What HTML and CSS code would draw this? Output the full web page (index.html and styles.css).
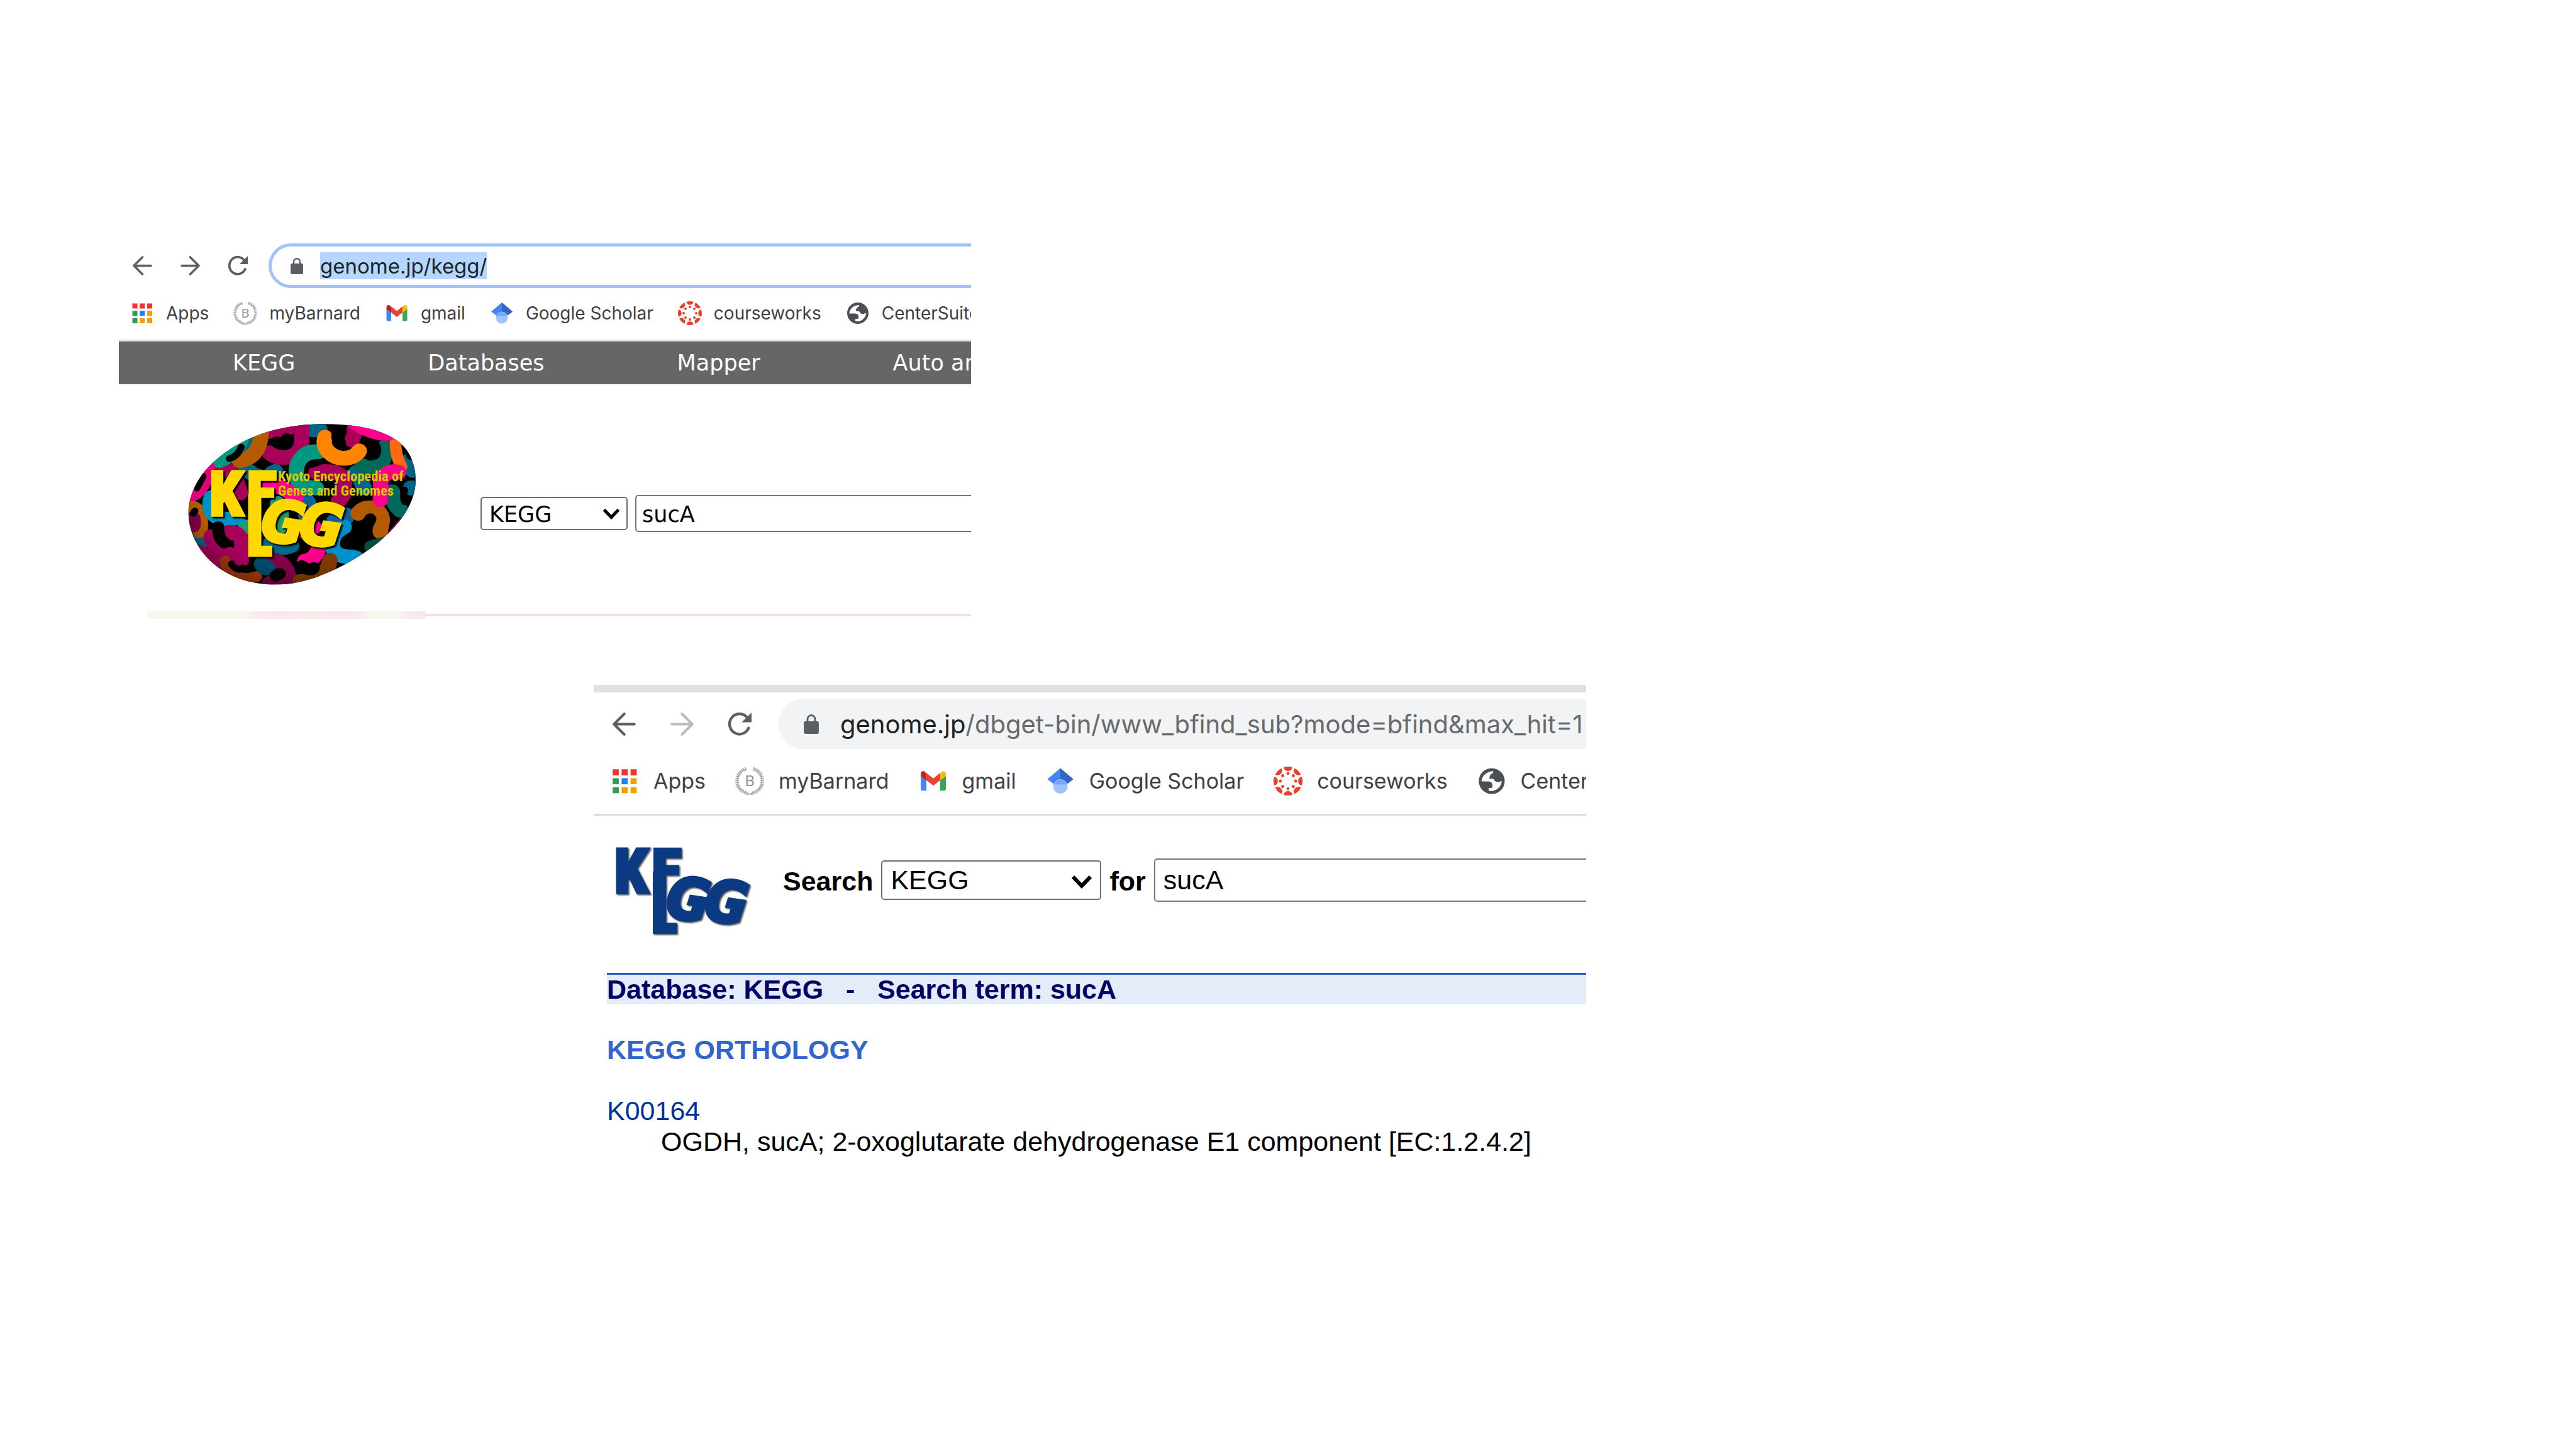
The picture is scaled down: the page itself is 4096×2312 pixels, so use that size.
FILE: index.html
```html
<!DOCTYPE html>
<html lang="en">
<head>
<meta charset="utf-8">
<title>KEGG search for sucA</title>
<link rel="stylesheet" href="styles.css">
</head>
<body>
<svg class="defs" aria-hidden="true">
  <symbol id="back" viewBox="0 0 32 32"><path d="M16 2 2 16l14 14M2 16h28" fill="none" stroke="currentColor" stroke-width="3.6" stroke-linecap="round" stroke-linejoin="round"/></symbol>
  <symbol id="forward" viewBox="0 0 32 32"><path d="M16 2l14 14-14 14M30 16H2" fill="none" stroke="currentColor" stroke-width="3.6" stroke-linecap="round" stroke-linejoin="round"/></symbol>
  <symbol id="reload" viewBox="0 0 32 32"><path d="M27.800 21.500A13.600 14 0 1 1 26 7" fill="none" stroke="currentColor" stroke-width="3.800" stroke-linecap="round"/><path d="M32 0v13.500H18.500z" fill="currentColor"/></symbol>
  <symbol id="lock" viewBox="0 0 20 26"><rect y="9" width="20" height="17" rx="2.500" fill="currentColor"/><path d="M5 10V6.300a5 5 0 0 1 10 0V10" fill="none" stroke="currentColor" stroke-width="2.400"/></symbol>
  <symbol id="chevron" viewBox="0 0 28 18"><path d="M2.500 2.500 14 14.500 25.500 2.500" fill="none" stroke="#000" stroke-width="5"/></symbol>
  <symbol id="apps" viewBox="0 0 38 38">
    <path fill="#f7312d" d="M3.500 3.500h8v8h-8zM15.200 3.500h8v8h-8zM27 3.500h8v8h-8z"/>
    <path fill="#2f9c55" d="M3.500 15.200h8v8h-8zM3.500 27h8v8h-8z"/>
    <path fill="#1b84f2" d="M15.200 15.200h8v8h-8z"/>
    <path fill="#f2a000" d="M27 15.200h8v8h-8zM15.200 27h8v8h-8zM27 27h8v8h-8z"/>
  </symbol>
  <symbol id="wreath" viewBox="0 0 38 38">
    <path d="M14.500 3C6 5 2.500 12 2.500 19.500 2.500 28 9 33.500 17 35.500M23.500 3C32 5 35.500 12 35.500 19.500 35.500 28 29 33.500 21 35.500" fill="none" stroke="#a6a6a6" stroke-width="4.600" stroke-dasharray="1.500 1"/>
    <path d="M14 3.500C6.500 6 3 12.500 3 19.500 3 27.500 9 33 16 35l6 2M24 3.500C31.500 6 35 12.500 35 19.500 35 27.500 29 33 22 35l-6 2" fill="none" stroke="#a6a6a6"/>
  </symbol>
  <symbol id="gmail" viewBox="0 0 38 38">
    <path fill="#4285f4" d="M2.500 11.500 10 17v14.500H4.500a2 2 0 0 1-2-2z"/>
    <path fill="#34a853" d="M35.500 11.500 28 17v14.500h5.500a2 2 0 0 0 2-2z"/>
    <path fill="#fbbc04" d="M28 9.500V18l7.500-5.500V9.300c0-3-3.300-4.300-5.500-2.600z"/>
    <path fill="#c5221f" d="M10 9.500V18l-7.500-5.500V9.300c0-3 3.300-4.300 5.500-2.600z"/>
    <path fill="#ea4335" d="M10 18V8.200l9 7.200 9-7.200V18l-9 7z"/>
  </symbol>
  <symbol id="scholar" viewBox="0 0 38 38">
    <path fill="#4285f4" d="M19 2 2 16.500l8 6h18l8-6z"/>
    <path fill="#3367c6" d="M19 2v18l10 2 7-5.500z"/>
    <circle cx="19" cy="26" r="9.500" fill="#a0c3ff"/>
    <path fill="#76a7fa" d="M10 23.500a9.500 9.500 0 0 1 18 0z"/>
  </symbol>
  <symbol id="canvas" viewBox="-19 -19 38 38">
    <g id="canvas-half" fill="#e8402c">
      <g id="canvas-pair"><path d="M-5.800-18Q0-20 5.800-18 4.500-13.300 0-13.300T-5.800-18z"/><circle cy="-10" r="2"/></g>
      <use href="#canvas-pair" transform="rotate(45)"/><use href="#canvas-pair" transform="rotate(90)"/><use href="#canvas-pair" transform="rotate(135)"/>
    </g>
    <use href="#canvas-half" transform="rotate(180)"/>
  </symbol>
  <symbol id="globe" viewBox="0 0 38 38">
    <circle cx="19" cy="19" r="17" fill="#4c4f54"/>
    <path fill="#fff" d="M5.500 19.500C6 12 12 6.500 20.700 6v2.500Q16 10 15.800 15.800H20q2 .2 2.500 2.200c1.500 3 6.500 3 9 .5l.5 1.500c-1 8-9 13.500-17 11.500V28h4.500q1-4 0-5.500-1-3-5.500-3z"/>
  </symbol>
</svg>

<main class="slide">
  <section class="panel home">
    <div class="toolbar">
      <button class="tool" aria-label="Back"><svg><use href="#back"/></svg></button>
      <button class="tool" aria-label="Forward"><svg><use href="#forward"/></svg></button>
      <button class="tool" aria-label="Reload"><svg><use href="#reload"/></svg></button>
      <div class="omnibox focused">
        <svg class="lock"><use href="#lock"/></svg>
        <input class="url selected" aria-label="Address" value="genome.jp/kegg/">
      </div>
    </div>
    <nav class="bookmarks">
      <a href="#"><svg><use href="#apps"/></svg>Apps</a>
      <a href="#"><svg viewBox="0 0 38 38"><use href="#wreath"/><text x="19" y="25.500" text-anchor="middle" class="wreath-letter">B</text></svg>myBarnard</a>
      <a href="#"><svg><use href="#gmail"/></svg>gmail</a>
      <a href="#"><svg><use href="#scholar"/></svg>Google Scholar</a>
      <a href="#"><svg><use href="#canvas"/></svg>courseworks</a>
      <a href="#"><svg><use href="#globe"/></svg>CenterSuite</a>
    </nav>
    <nav class="site-nav">
      <a href="#">KEGG</a><a href="#">Databases</a><a href="#">Mapper</a><a href="#">Auto annotation</a>
    </nav>
    <div class="hero">
      <svg class="egg" viewBox="240 155 1180 835" role="img" aria-label="KEGG">
        <defs>
          <clipPath id="egg-shape"><path d="M237 610C240 520 290 420 370 350 500 230 680 165 900 162 1150 160 1290 225 1335 320 1355 365 1365 400 1365 450 1365 620 1200 770 1060 855 940 930 800 985 670 985 400 985 237 800 237 610Z"/></clipPath>
          <clipPath id="e-top"><path d="M150-10h200v165h-200z"/></clipPath>
          <radialGradient id="shade" cx=".5" cy=".4" r=".62"><stop offset=".72" stop-color="#000" stop-opacity="0"/><stop offset="1" stop-color="#000" stop-opacity=".4"/></radialGradient>
        </defs>
        <g transform="scale(1.033 1)">
        <g clip-path="url(#egg-shape)">
          <path d="M200 100h1200v950H200z"/>
          <g fill="none" stroke-linecap="round" stroke-width="76">
            <path stroke="#006688" d="M530 300l30-30M520 390q60 60 150 15M800 170q40 30 90 20M1070 410l40 80M1330 350l20 50M1340 490h10M640 780q50 30 110 5M280 765l20 5"/>
            <path stroke="#0f6299" d="M830 560q20 40-10 70M960 660q60 0 65-30"/>
            <path stroke="#00695a" d="M1210 280c20 90-60 130-110 95M1250 510c0 50 10 70 40 95"/>
            <path stroke="#a8005a" d="M620 200q90 0 160-40M640 310c60 50 160 20 160-60V170M1060 190c10 20-10 40-10 55M395 405c40-20 70 0 100 110M870 410c60-10 160-10 140 80 0 50-10 40-30 70"/>
            <path stroke="#009980" d="M390 350q80-30 110-110M880 305c-70-5-108 45-108 105 0 70 50 80 100 80"/>
            <path stroke="#b45a00" d="M490 350c70-10 110-60 110-170M240 590c60 0 60 70 55 120M1080 620c40-50 110-30 120 30 0 30-15 60-10 65"/>
            <path stroke="#ff8400" d="M915 230c-20 60 40 108 90 108 50 0 72-25 80-38"/>
            <path stroke="#ff6a10" stroke-width="58" d="M1265 250q0 80 30 130"/>
            <path stroke="#fb0088" d="M1060 150q80 60 170 60M640 480q60-10 130 60M1190 550c10-90-10-80 10-110 20-30 40-40 80-30M800 710l60-20"/>
            <path stroke="#e4007c" stroke-width="56" d="M260 530c50-20 80-90 80-150"/>
            <path stroke="#064d41" stroke-width="60" d="M1140 790l70-20"/>
            <path stroke="#1f9c68" d="M520 690h60M680 570q30 40 10 120"/>
            <path stroke="#0090c8" d="M350 540c-30 90 50 130 130 100M1010 690c-80 40-70 130-20 145 50 15 60 5 80 15"/>
            <path stroke="#a8005a" d="M430 720c60-10 80 30 70 90v50M350 740c30 90 60 90 90 90M290 820q50 20 90 80M1310 680l-50 60"/>
            <path stroke="#800045" d="M640 860c60-10 110 60 90 120h-90M260 650v30"/>
            <path stroke="#a83a0c" stroke-width="56" d="M420 865c10 60 70 110 155 80"/>
            <path stroke="#004a6c" d="M600 880q10 20 30 20"/>
            <path stroke="#fb0088" d="M880 810q-20 50-65 55"/>
            <path stroke="#7c3a00" d="M790 970q130 0 150-110"/>
          </g>
          <g fill="none" stroke="#000" stroke-linecap="round">
            <path stroke-width="60" d="M675 255q20 20 50-15M980 205q-10 30 10 55M1155 270q15 20 5 45M1140 650q-40 70-100 120M800 890q40 30 60 10M690 930l-20 10M385 690q0 60 30 80"/>
            <path stroke-width="34" d="M500 280q-20 50-60 60M260 620l10-12M310 430q-20 40-30 60M1310 500q-10 40 0 60M590 375l20 5M850 370l30-10M810 780v30M450 880q30 40 60 20M1330 300q0 20 10 30"/>
          </g>
          <path fill="url(#shade)" d="M200 100h1200v950H200z"/>
        </g>
        </g>
        <g class="tagline"><text x="704" y="456">Kyoto Encyclopedia of</text><text x="704" y="529">Genes and Genomes</text></g>
        <g class="letters gold" transform="translate(367 402)">
          <text x="-14" y="228">K</text>
          <text x="178" y="228" clip-path="url(#e-top)">E</text>
          <path d="M184 120h68v320h-68zM184 384h124v57H184z" stroke="none"/>
          <text x="257" y="366" transform="rotate(8 360 260)" class="slant">G</text>
          <text x="453" y="380" transform="rotate(8 556 272)" class="slant">G</text>
        </g>
      </svg>
      <form class="finder">
        <span class="picker">
          <select aria-label="Database"><option>KEGG</option></select>
          <svg><use href="#chevron"/></svg>
        </span>
        <input class="term" aria-label="Search term" value="sucA">
      </form>
    </div>
    <div class="divider"><div class="divider-tab"></div><div class="divider-line"></div></div>
  </section>

  <section class="panel results">
    <div class="toolbar">
      <button class="tool" aria-label="Back"><svg><use href="#back"/></svg></button>
      <button class="tool" aria-label="Forward" disabled><svg><use href="#forward"/></svg></button>
      <button class="tool" aria-label="Reload"><svg><use href="#reload"/></svg></button>
      <div class="omnibox">
        <svg class="lock"><use href="#lock"/></svg>
        <label class="host" for="path">genome.jp</label>
        <input class="url path" id="path" value="/dbget-bin/www_bfind_sub?mode=bfind&amp;max_hit=1">
      </div>
    </div>
    <nav class="bookmarks">
      <a href="#"><svg><use href="#apps"/></svg>Apps</a>
      <a href="#"><svg viewBox="0 0 38 38"><use href="#wreath"/><text x="19" y="25.500" text-anchor="middle" class="wreath-letter">B</text></svg>myBarnard</a>
      <a href="#"><svg><use href="#gmail"/></svg>gmail</a>
      <a href="#"><svg><use href="#scholar"/></svg>Google Scholar</a>
      <a href="#"><svg><use href="#canvas"/></svg>courseworks</a>
      <a href="#"><svg><use href="#globe"/></svg>CenterSuite</a>
    </nav>
    <div class="page">
      <div class="search-row">
        <svg class="logo" viewBox="0 0 690 460" role="img" aria-label="KEGG">
          <g class="letters navy">
            <text x="-14" y="228">K</text>
            <text x="178" y="228" clip-path="url(#e-top)">E</text>
            <path d="M184 120h68v320h-68zM184 384h124v57H184z" stroke="none"/>
            <text x="257" y="366" transform="rotate(8 360 260)" class="slant">G</text>
            <text x="453" y="380" transform="rotate(8 556 272)" class="slant">G</text>
          </g>
        </svg>
        <form class="finder">
          <label for="db">Search</label>
          <span class="picker">
            <select id="db"><option>KEGG</option></select>
            <svg><use href="#chevron"/></svg>
          </span>
          <label for="term">for</label>
          <input class="term" id="term" value="sucA">
        </form>
      </div>
      <h1>Database: KEGG &nbsp; - &nbsp; Search term: sucA</h1>
      <h2>KEGG ORTHOLOGY</h2>
      <dl>
        <dt><a href="#">K00164</a></dt>
        <dd>OGDH, sucA; 2-oxoglutarate dehydrogenase E1 component [EC:1.2.4.2]</dd>
      </dl>
    </div>
  </section>
</main>
</body>
</html>
```

FILE: styles.css
```css
* { box-sizing: border-box; }
body { margin: 0; background: #fff; color: #000; }
a { text-decoration: none; color: inherit; }
button, input, select { font: inherit; color: inherit; margin: 0; }
svg { display: block; flex: none; overflow: visible; }
.defs { position: absolute; width: 0; height: 0; }

.slide {
  display: grid;
  grid-template-columns: 189fr 755fr 600fr 978fr 1574fr;
  align-content: start;
  row-gap: 104px;
  min-height: 100vh;
  padding-top: 387px;
}
.panel { overflow: hidden; min-width: 0; }
.home { grid-column: 2 / 4; }
.results { grid-column: 3 / 5; }

/* Browser toolbar */
.toolbar { display: flex; align-items: center; color: #5b5f65; }
.tool { border: 0; padding: 0; background: none; flex: none; }
.tool svg { width: 100%; height: 100%; }
.tool:disabled { color: #b9bbbd; }
.omnibox { flex: 1; min-width: 0; display: flex; align-items: center; font-family: Inter, sans-serif; }
.url { border: 0; padding: 0; background: none; outline: 0; color: #202124; }

.home .toolbar { padding-left: 22px; gap: 45px; }
.home .tool { width: 31px; height: 31px; }
.home .omnibox {
  height: 71px;
  margin-left: -12px;
  margin-right: -40px;
  padding-left: 30px;
  border: 5px solid #a0c2ff;
  border-radius: 36px;
  font-size: 33px;
}
.home .lock { width: 20px; height: 26px; margin-right: 27px; }
.selected { field-sizing: content; height: 43px; background: #b3d7ff; }

.results { border-top: 12px solid #dee0e4; }
.results .toolbar { padding: 10px 0 0 30px; gap: 55px; }
.results .tool { width: 37px; height: 37px; }
.results .omnibox {
  height: 80px;
  margin-left: -12px;
  padding-left: 40px;
  border-radius: 40px 0 0 40px;
  background: #f1f3f4;
  font-size: 40px;
}
.results .lock { width: 24px; height: 31px; margin-right: 34px; }
.host { color: #202124; flex: none; }
.path { flex: 1; min-width: 0; color: #67696c; }

/* Bookmarks bar */
.bookmarks {
  display: flex;
  white-space: nowrap;
  font-family: Inter, sans-serif;
  color: #3c4043;
}
.bookmarks a { display: flex; align-items: center; flex: none; }
.home .bookmarks { padding: 21px 0 23px 18px; gap: 39px; font-size: 28px; line-height: 38px; border-bottom: 3px solid #dcdfe1; }
.home .bookmarks a { gap: 19px; }
.home .bookmarks svg { width: 38px; height: 38px; }
.results .bookmarks { padding: 28px 0 29px 26px; gap: 47px; font-size: 34px; line-height: 46px; border-bottom: 3px solid #d9dce0; }
.results .bookmarks a { gap: 23px; }
.results .bookmarks svg { width: 46px; height: 46px; }
.wreath-letter { font: 20px "Noto Sans", sans-serif; fill: #939393; }

/* KEGG home page */
.site-nav {
  display: flex;
  gap: 211px;
  padding-left: 181px;
  background: #666;
  color: #fff;
  font: 35px/68px "DejaVu Sans", sans-serif;
  white-space: nowrap;
}
.hero { display: flex; align-items: flex-start; padding: 61px 0 41px 109px; }
.egg { width: 366px; height: 259px; }
.letters { font: bold 310px "Roboto Condensed", Roboto, sans-serif; stroke-width: 18px; }
.gold { fill: #ffd800; stroke: #ffd800; filter: drop-shadow(8px 8px 3px #000); }
.navy { fill: #0b3982; stroke: #0b3982; filter: drop-shadow(6px 6px 4px #000a); }
.slant { font: italic bold 294px "DejaVu Sans Condensed", "DejaVu Sans", sans-serif; }
.tagline { font: bold 73px "Roboto Condensed", "Liberation Sans Narrow", sans-serif; fill: #d8cc00; }
.finder { flex: 1; min-width: 0; display: flex; align-items: center; gap: 12px; }
.picker { position: relative; flex: none; }
.picker svg { position: absolute; top: 50%; }
.picker select { appearance: none; width: 100%; height: 100%; display: block; background: #fff; border: 2px solid #6f6f6f; border-radius: 5px; }
.term { flex: 1; min-width: 0; background: #fff; border: 2px solid #767676; border-radius: 5px; }

.home .finder { margin: 115px -10px 0 100px; font: 35px "DejaVu Sans", sans-serif; }
.home .picker { width: 234px; height: 53px; }
.home .picker select { padding: 3px 0 0 12px; }
.home .picker svg { width: 28px; height: 18px; right: 12px; margin-top: -9px; }
.home .term { height: 59px; padding: 3px 9px 0; }

.divider { display: flex; align-items: center; padding-left: 45px; margin-bottom: 1px; }
.divider-tab { width: 442px; height: 12px; background: linear-gradient(90deg, #f6f5ee 36%, #f8e8eb 42% 52%, #f8ecea 56%, #f8e8eb 62% 76%, #f6f5ee 80% 90%, #f8e8eb 95%); }
.divider-line { flex: 1; height: 4px; background: #f0dfe3; }

/* KEGG results page */
.page { padding-left: 21px; font: 43px/49px "Liberation Sans", sans-serif; }
.search-row { display: flex; align-items: flex-start; padding: 51px 0 56px 16px; }
.logo { width: 214px; height: 143px; }
.results .finder { gap: 13px; margin: 17px -10px 0 50px; }
.finder label { font-weight: bold; padding-top: 3px; }
.results .picker { width: 350px; height: 63px; }
.results .picker select { padding: 0 0 0 13px; }
.results .picker svg { width: 34px; height: 22px; right: 14px; margin-top: -9px; }
.results .term { height: 69px; padding: 0 13px; }
h1, h2 { font-size: 43px; margin: 0; }
h1 { line-height: 47px; border-top: 3px solid #2459cc; background: #e4ebf9; color: #006; white-space: pre-wrap; }
h2 { margin: 48px 0; color: #36c; }
dl { margin: 0; }
dt { color: #039; }
dd { margin: 0 0 0 86px; white-space: nowrap; }
```
